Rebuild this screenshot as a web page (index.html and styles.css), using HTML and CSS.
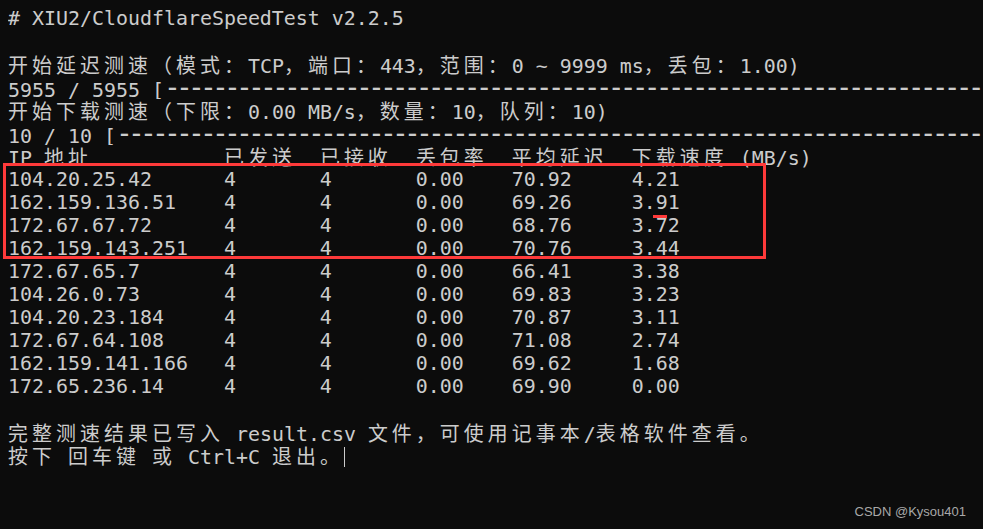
FILE: index.html
```html
<!DOCTYPE html>
<html lang="zh-CN">
<head>
<meta charset="utf-8">
<title>CloudflareSpeedTest</title>
<link rel="stylesheet" href="styles.css">
</head>
<body>
<div class="screen">
  <div class="term">
    <div class="ln"># XIU2/CloudflareSpeedTest v2.2.5</div>
    <div class="ln"> </div>
    <div class="ln"><span class="w">开始延迟测速（模式：</span>TCP<span class="w">，端口：</span>443<span class="w">，范围：</span>0 ~ 9999 ms<span class="w">，丢包：</span>1.00)</div>
    <div class="ln">5955 / 5955 [<span class="bar">--------------------------------------------------------------------------------------------</span></div>
    <div class="ln"><span class="w">开始下载测速（下限：</span>0.00 MB/s<span class="w">，数量：</span>10<span class="w">，队列：</span>10)</div>
    <div class="ln">10 / 10 [<span class="bar">----------------------------------------------------------------------------------------------</span></div>
    <div class="ln">IP <span class="w">地址</span>           <span class="w">已发送</span>  <span class="w">已接收</span>  <span class="w">丢包率</span>  <span class="w">平均延迟</span>  <span class="w">下载速度</span> (MB/s)</div>
    <div class="ln">104.20.25.42      4       4       0.00    70.92     4.21</div>
    <div class="ln">162.159.136.51    4       4       0.00    69.26     3.91</div>
    <div class="ln">172.67.67.72      4       4       0.00    68.76     3.72</div>
    <div class="ln">162.159.143.251   4       4       0.00    70.76     3.44</div>
    <div class="ln">172.67.65.7       4       4       0.00    66.41     3.38</div>
    <div class="ln">104.26.0.73       4       4       0.00    69.83     3.23</div>
    <div class="ln">104.20.23.184     4       4       0.00    70.87     3.11</div>
    <div class="ln">172.67.64.108     4       4       0.00    71.08     2.74</div>
    <div class="ln">162.159.141.166   4       4       0.00    69.62     1.68</div>
    <div class="ln">172.65.236.14     4       4       0.00    69.90     0.00</div>
    <div class="ln"> </div>
    <div class="ln"><span class="w">完整测速结果已写入</span> result.csv <span class="w">文件，可使用记事本</span>/<span class="w">表格软件查看。</span></div>
    <div class="ln"><span class="w">按下</span> <span class="w">回车键</span> <span class="w">或</span> Ctrl+C <span class="w">退出。</span><span class="cursor"></span></div>
  </div>
  <div class="mark-box"></div>
  <div class="mark-dash"></div>
  <div class="watermark">CSDN @Kysou401</div>
</div>
</body>
</html>
```

FILE: styles.css
```css
html, body {
  margin: 0;
  padding: 0;
  background: #0c0c0c;
  overflow: hidden;
}

.screen {
  position: relative;
  width: 983px;
  height: 529px;
  background: #0c0c0c;
  overflow: hidden;
}

.term {
  padding: 7px 0 0 8px;
  font-family: "DejaVu Sans Mono", "Noto Sans CJK SC", monospace;
  font-size: 19.93px;
  line-height: 23px;
  color: #cccccc;
  overflow: hidden;
}

.ln {
  height: 23px;
  white-space: pre;
  overflow: hidden;
}

.w {
  font-family: "Noto Sans CJK SC", sans-serif;
  letter-spacing: 4.07px;
}

.bar {
  font-size: 28px;
  letter-spacing: -4.86px;
}

.cursor {
  display: inline-block;
  width: 1px;
  height: 21px;
  background: #cccccc;
  vertical-align: -4px;
}

.mark-box {
  position: absolute;
  left: 3px;
  top: 163px;
  width: 757px;
  height: 90px;
  border: 3px solid #ff3a3a;
}

.mark-dash {
  position: absolute;
  left: 653px;
  top: 215px;
  width: 14px;
  height: 3px;
  background: #ff3a3a;
}

.watermark {
  position: absolute;
  right: 17px;
  bottom: 10px;
  font-family: "Liberation Sans", Arial, sans-serif;
  font-size: 13px;
  color: #a8a8a8;
}
```
